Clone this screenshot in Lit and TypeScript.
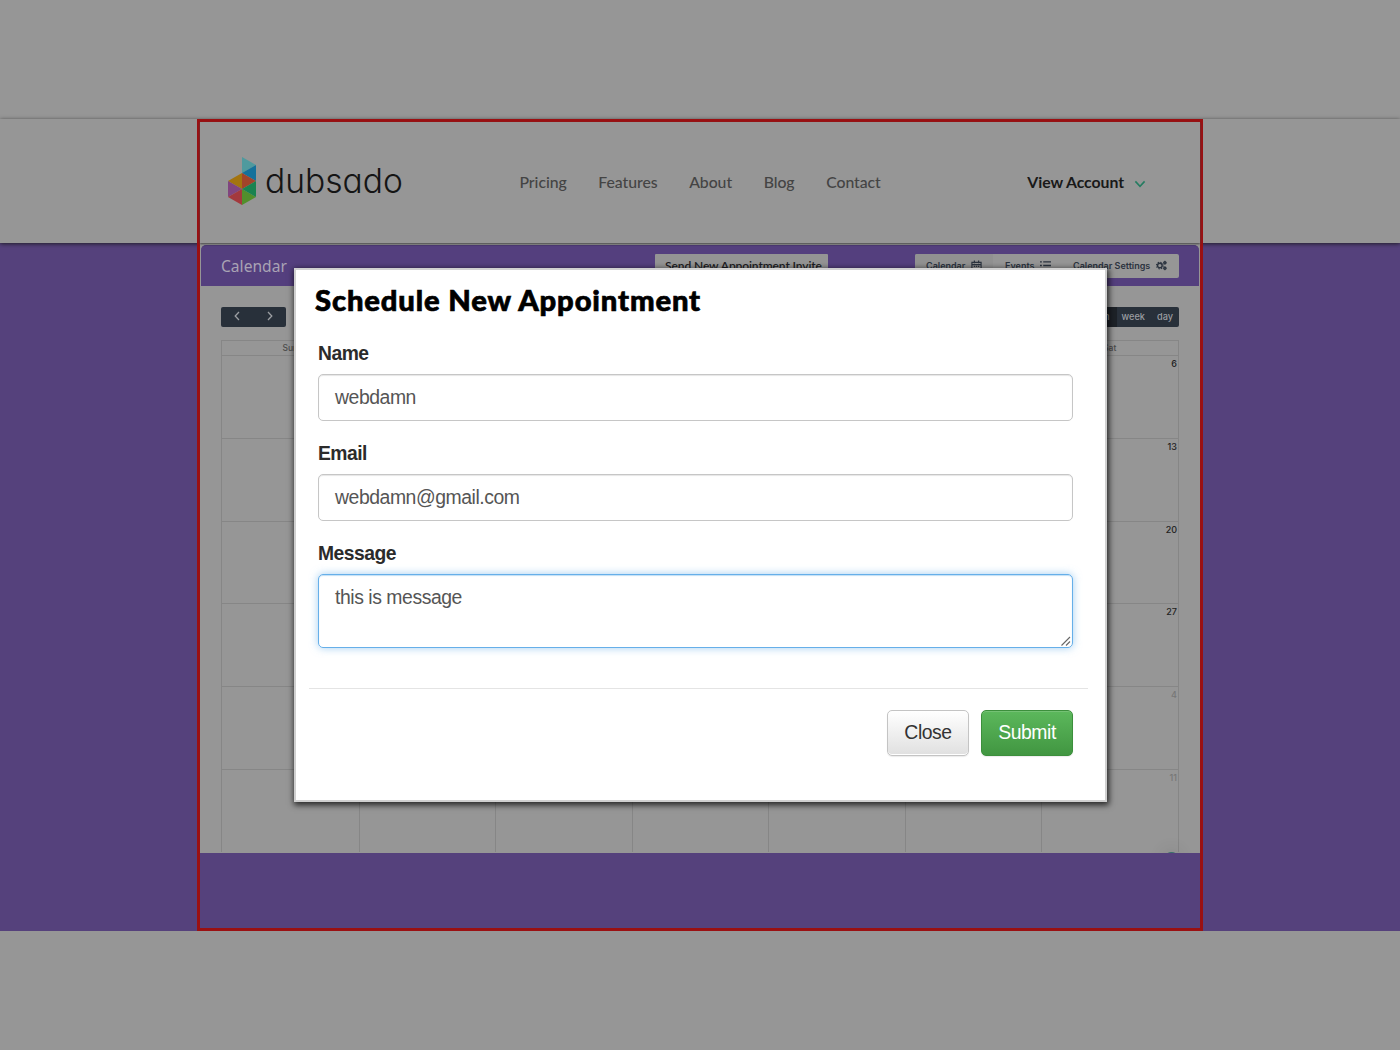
import { LitElement, html, svg, css } from "lit";
import { customElement } from "lit/decorators.js";

const NAV = ["Pricing", "Features", "About", "Blog", "Contact"];
const DAYS = ["Sun", "Mon", "Tue", "Wed", "Thu", "Fri", "Sat"];
const WEEKS = [
  { last: "6", muted: false },
  { last: "13", muted: false },
  { last: "20", muted: false },
  { last: "27", muted: false },
  { last: "4", muted: true },
  { last: "11", muted: true },
];

const FACETS: [string, string][] = [
  ["14,0 28,8 14,16", "#4f9a9e"],
  ["28,8 28,24 14,16", "#14719b"],
  ["14,16 28,24 14,32", "#a1442a"],
  ["14,16 14,32 0,24", "#a3740f"],
  ["0,24 14,32 0,40", "#80457f"],
  ["0,40 14,32 14,48", "#a3393d"],
  ["14,32 28,40 14,48", "#528f2c"],
  ["28,24 28,40 14,32", "#1a8350"],
];

@customElement("site-header")
class SiteHeader extends LitElement {
  static styles = css`
    :host {
      display: flex;
      align-items: center;
      height: 121px;
      box-sizing: border-box;
      padding: 0 54px 2px 28px;
      font-family: Lato, sans-serif;
      color: #444;
      position: relative;
      z-index: 1;
      background: #969696;
      box-shadow: 0 1px 2px #444;
    }
    .mark { width: 28px; height: 48px; display: block; margin-top: -1px; }
    .word {
      font: 300 33.6px/40px Inter, sans-serif;
      font-feature-settings: "cv11";
      letter-spacing: 0;
      color: #151515;
      margin: -1px 0 0 9px;
      width: 254.5px;
    }
    .nav { display: flex; gap: 31.6px; font-size: 15.8px; font-weight: 500; letter-spacing: -0.05px; }
    .account {
      display: flex;
      align-items: center;
      gap: 10px;
      margin-left: auto;
      font-size: 15.8px;
      letter-spacing: -0.05px;
      font-weight: 700;
      color: #191919;
    }
    .chev { width: 12px; height: 8px; display: block; margin-top: 4px; }
  `;
  render() {
    return html`
      <svg class="mark" viewBox="0 0 28 48">
        ${FACETS.map(([p, c]) => svg`<polygon points=${p} fill=${c} />`)}
      </svg>
      <div class="word">dubsado</div>
      <div class="nav">${NAV.map((n) => html`<span>${n}</span>`)}</div>
      <div class="account">
        <span>View Account</span>
        <svg class="chev" viewBox="0 0 12 8"><path d="M1.4 1.4 6 6.3 10.6 1.4" fill="none" stroke="#257c61" stroke-width="1.6" /></svg>
      </div>
    `;
  }
}

@customElement("calendar-board")
class CalendarBoard extends LitElement {
  static styles = css`
    :host {
      display: block;
      position: relative;
      height: 610px;
      box-sizing: border-box;
      padding: 2px 1px 0;
      background: #969696;
      overflow: hidden;
      font-family: Lato, sans-serif;
    }
    .bar {
      display: flex;
      align-items: center;
      height: 41px;
      box-sizing: border-box;
      padding: 0 20px;
      border-radius: 5px 5px 0 0;
      background: #543f7e;
      border-top: 1px solid #4a3673;
    }
    .title { font: 400 15.6px/20px "Noto Sans", sans-serif; color: #a9a3b4; width: 434px; }
    .invite {
      width: 173px;
      height: 24px;
      box-sizing: border-box;
      padding-top: 5px;
      padding-left: 4px;
      text-align: center;
      background: #949494;
      color: #1c1c22;
      font-size: 12px;
      letter-spacing: -0.1px;
      line-height: 14px;
      font-weight: 600;
      border-radius: 1px;
      white-space: nowrap;
    }
    .tabs {
      display: flex;
      width: 264px;
      height: 24px;
      margin-left: auto;
      background: #969696;
      border-radius: 2px;
      color: #2b333f;
      font: 600 9px/24px Inter, sans-serif;
    }
    .tab { display: flex; align-items: center; gap: 6px; box-sizing: border-box; padding-left: 11px; white-space: nowrap; }
    .tab:nth-child(1) { width: 78px; background: #919191; border-radius: 2px 0 0 2px; }
    .tab:nth-child(2) { width: 69px; padding-left: 12px; }
    .tab:nth-child(3) { width: 117px; }
    .ico { width: 11px; height: 11px; display: block; flex: none; margin-top: -1px; }
    .tools { display: flex; justify-content: space-between; padding: 20.5px 20px 0; height: 54px; box-sizing: border-box; }
    .group {
      display: flex;
      height: 20px;
      background: #28303a;
      border-radius: 2px;
      overflow: hidden;
      color: #9a9da1;
      font: 500 9.2px/19px Inter, sans-serif;
    }
    .arrow { width: 32.5px; display: flex; align-items: center; justify-content: center; }
    .arrow svg { width: 6px; height: 10px; display: block; margin-top: -1px; }
    .view { padding: 0 5px; }
    .view.on { background: #1d2228; padding: 0 7px; }
    .view:last-child { padding-left: 7px; padding-right: 6px; }
    .grid {
      display: grid;
      grid-template-columns: repeat(7, 1fr);
      grid-template-rows: 14px repeat(6, 82.8px);
      margin: 0 20px;
      width: 958px;
      box-sizing: border-box;
      border: 1px solid #868686;
      border-bottom: 0;
    }
    .head { font: 500 8.5px/14px Inter, sans-serif; color: #4c4c4c; text-align: center; }
    .cell {
      border-top: 1px solid #868686;
      border-left: 1px solid #868686;
      font: 500 9px/15px Inter, sans-serif;
      color: #222;
      text-align: right;
      padding-right: 1px;
    }
    .cell.first { border-left: 0; }
    .cell.muted { color: #777; }
    .bubble {
      position: absolute;
      right: 22px;
      bottom: -11px;
      width: 13px;
      height: 12px;
      border-radius: 6px 6px 0 0;
      background: #3c6f6c;
      box-shadow: 0 0 14px 6px rgba(0, 0, 0, 0.05);
    }
  `;
  render() {
    return html`
      <div class="bar">
        <div class="title">Calendar</div>
        <div class="invite">Send New Appointment Invite</div>
        <div class="tabs">
          <div class="tab">Calendar
            <svg class="ico" viewBox="0 0 12 12"><path d="M1 2.5h10v9H1zM1 5h10M3.7 .5v3M8.3 .5v3M3 7h1.5M5.3 7h1.5M7.6 7h1.5M3 9.3h1.5M5.3 9.3h1.5M7.6 9.3h1.5" fill="none" stroke="#2b333f" stroke-width="1.3" /></svg>
          </div>
          <div class="tab">Events
            <svg class="ico" viewBox="0 0 12 12"><path d="M0 2h2M0 6h2M0 10h2M3.5 2H12M3.5 6H12M3.5 10H12" stroke="#2b333f" stroke-width="1.4" /></svg>
          </div>
          <div class="tab">Calendar Settings
            <svg class="ico" viewBox="0 0 12 12" fill="none" stroke="#2b333f">
              <circle cx="4.2" cy="6" r="2.5" stroke-width="1.5" /><circle cx="4.2" cy="6" r="3.7" stroke-width="1.1" stroke-dasharray="1.5 1.4" />
              <circle cx="9.7" cy="3" r="1.2" stroke-width="1.3" /><circle cx="9.7" cy="9" r="1.2" stroke-width="1.3" />
              <path d="M9.7 .7v4.6M7.6 3h4.2M9.7 6.7v4.6M7.6 9h4.2" stroke-width=".7" />
            </svg>
          </div>
        </div>
      </div>
      <div class="tools">
        <div class="group">
          <span class="arrow"><svg viewBox="0 0 6 10"><path d="M5 1 1.2 5 5 9" fill="none" stroke="#9a9da1" stroke-width="1.3" /></svg></span>
          <span class="arrow"><svg viewBox="0 0 6 10"><path d="M1 1 4.8 5 1 9" fill="none" stroke="#9a9da1" stroke-width="1.3" /></svg></span>
        </div>
        <div class="group">
          <span class="view on">month</span><span class="view">week</span><span class="view">day</span>
        </div>
      </div>
      <div class="grid">
        ${DAYS.map((d) => html`<div class="head">${d}</div>`)}
        ${WEEKS.map((w) =>
          DAYS.map((_, i) => html`<div class="cell ${i === 0 ? "first" : ""} ${w.muted ? "muted" : ""}">${i === 6 ? w.last : ""}</div>`)
        )}
      </div>
      <div class="bubble"></div>
    `;
  }
}

@customElement("appointment-dialog")
class AppointmentDialog extends LitElement {
  static styles = css`
    :host {
      display: block;
      box-sizing: border-box;
      border: 2px solid #d0d0d0;
      background: #fff;
      box-shadow: 1px 2px 6px 1px rgba(0, 0, 0, 0.75);
      padding: 13px 17px 0 13px;
      font: 19.4px/24px "Liberation Sans", Arial, sans-serif;
      letter-spacing: -0.45px;
      color: #333;
    }
    .title {
      margin: 0 0 0 6px;
      font: 900 29.2px/34px Lato, sans-serif;
      letter-spacing: 0.86px;
      -webkit-text-stroke: 0.7px #000;
      color: #000;
      white-space: nowrap;
    }
    .form { padding: 0 15px 0 9px; }
    .field { display: flex; flex-direction: column; }
    .label { font-weight: 700; font-size: 19.3px; line-height: 24px; letter-spacing: -0.5px; color: #2b2b2b; margin-bottom: 8px; }
    .f1 { margin-top: 25px; }
    .f2 { margin-top: 21px; }
    .box {
      box-sizing: border-box;
      height: 47px;
      border: 1px solid #c6c6c6;
      border-radius: 5px;
      box-shadow: inset 0 1px 1px rgba(0, 0, 0, 0.1);
      padding: 10px 16px;
      color: #555;
    }
    .area {
      height: 74px;
      border-color: #66afe9;
      box-shadow: inset 0 1px 1px rgba(102, 175, 233, 0.4), 0 0 8px rgba(102, 175, 233, 0.6);
      display: flex;
      justify-content: space-between;
      padding-right: 1px;
      padding-bottom: 1px;
    }
    .grip { width: 10px; height: 10px; align-self: flex-end; }
    .actions {
      display: flex;
      justify-content: flex-end;
      gap: 12px;
      margin-top: 40px;
      border-top: 1px solid #e4e4e4;
      padding: 21px 15px 0 0;
    }
    .btn {
      box-sizing: border-box;
      height: 46px;
      border-radius: 5px;
      border: 1px solid #c4c4c4;
      text-align: center;
      line-height: 43px;
    }
    .close {
      width: 82px;
      background: linear-gradient(#fff, #e0e0e0);
      box-shadow: inset 0 -1px 0 #fff, 0 1px 1px rgba(0, 0, 0, 0.08);
    }
    .submit {
      width: 92px;
      color: #fff;
      border-color: #3c8f3c;
      background: linear-gradient(#5cb85c, #419641);
      box-shadow: inset 0 1px 0 rgba(255, 255, 255, 0.15), 0 1px 1px rgba(0, 0, 0, 0.08);
    }
  `;
  render() {
    return html`
      <h1 class="title">Schedule New Appointment</h1>
      <div class="form">
        <div class="field f1"><span class="label">Name</span><div class="box">webdamn</div></div>
        <div class="field f2"><span class="label">Email</span><div class="box">webdamn@gmail.com</div></div>
        <div class="field f2"><span class="label">Message</span>
          <div class="box area">this is message
            <svg class="grip" viewBox="0 0 10 10"><path d="M.5 9.5 9 1M5 9.5 9 5.5" stroke="#666" stroke-width="1.1" /></svg>
          </div>
        </div>
      </div>
      <div class="actions">
        <div class="btn close">Close</div>
        <div class="btn submit">Submit</div>
      </div>
    `;
  }
}

@customElement("app-root")
class AppRoot extends LitElement {
  static styles = css`
    :host {
      display: block;
      position: relative;
      width: 1400px;
      height: 1050px;
      box-sizing: border-box;
      padding-top: 119px;
      background: #969696;
      overflow: hidden;
    }
    .stage { position: relative; display: flex; justify-content: center; height: 812px; background: #55417c; }
    .band {
      position: absolute;
      inset: 0 0 auto 0;
      height: 124px;
      background: #969696;
      box-shadow: 0 1px 4px rgba(20, 20, 20, 0.8);
    }
    .frame { position: relative; box-sizing: border-box; width: 1006px; height: 812px; border: 3px solid #9a1012; background: #55417c; }
    .dialog { position: absolute; z-index: 2; left: 294px; top: 268px; width: 813px; height: 534px; }
  `;
  render() {
    return html`
      <div class="stage">
        <div class="band"></div>
        <div class="frame">
          <site-header></site-header>
          <calendar-board></calendar-board>
        </div>
      </div>
      <appointment-dialog class="dialog"></appointment-dialog>
    `;
  }
}
